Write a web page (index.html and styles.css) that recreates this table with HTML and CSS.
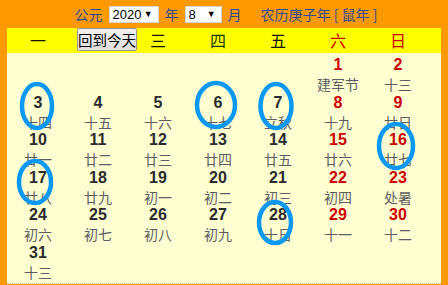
FILE: index.html
```html
<!DOCTYPE html>
<html lang="zh-CN">
<head>
<meta charset="utf-8">
<title>万年历</title>
<link rel="stylesheet" href="styles.css">
</head>
<body>
<div class="page">
  <div class="top">
    <span class="lbl">公元</span>
    <span class="sel sel-year"><span class="val">2020</span><span class="arr">▼</span></span>
    <span class="lbl">年</span>
    <span class="sel sel-month"><span class="val">8</span><span class="arr">▼</span></span>
    <span class="lbl">月</span>
    <span class="lbl lyear">农历庚子年 [ 鼠年 ]</span>
  </div>
  <div class="panel">
    <div class="week">
      <div class="wd">一</div>
      <div class="wd"><button class="today">回到今天</button></div>
      <div class="wd">三</div>
      <div class="wd thu">四</div>
      <div class="wd">五</div>
      <div class="wd we">六</div>
      <div class="wd we">日</div>
    </div>
    <div class="days">
      <div class="d"></div><div class="d"></div><div class="d"></div><div class="d"></div><div class="d"></div>
      <div class="d we"><div class="n">1</div><div class="l">建军节</div></div>
      <div class="d we"><div class="n">2</div><div class="l">十三</div></div>

      <div class="d"><div class="n">3</div><div class="l">十四</div></div>
      <div class="d"><div class="n">4</div><div class="l">十五</div></div>
      <div class="d"><div class="n">5</div><div class="l">十六</div></div>
      <div class="d"><div class="n">6</div><div class="l">十七</div></div>
      <div class="d"><div class="n">7</div><div class="l">立秋</div></div>
      <div class="d we"><div class="n">8</div><div class="l">十九</div></div>
      <div class="d we"><div class="n">9</div><div class="l">廿日</div></div>

      <div class="d"><div class="n">10</div><div class="l">廿一</div></div>
      <div class="d"><div class="n">11</div><div class="l">廿二</div></div>
      <div class="d"><div class="n">12</div><div class="l">廿三</div></div>
      <div class="d"><div class="n">13</div><div class="l">廿四</div></div>
      <div class="d"><div class="n">14</div><div class="l">廿五</div></div>
      <div class="d we"><div class="n">15</div><div class="l">廿六</div></div>
      <div class="d we"><div class="n">16</div><div class="l">廿七</div></div>

      <div class="d"><div class="n">17</div><div class="l">廿八</div></div>
      <div class="d"><div class="n">18</div><div class="l">廿九</div></div>
      <div class="d"><div class="n">19</div><div class="l">初一</div></div>
      <div class="d"><div class="n">20</div><div class="l">初二</div></div>
      <div class="d"><div class="n">21</div><div class="l">初三</div></div>
      <div class="d we"><div class="n">22</div><div class="l">初四</div></div>
      <div class="d we"><div class="n">23</div><div class="l">处暑</div></div>

      <div class="d"><div class="n">24</div><div class="l">初六</div></div>
      <div class="d"><div class="n">25</div><div class="l">初七</div></div>
      <div class="d"><div class="n">26</div><div class="l">初八</div></div>
      <div class="d"><div class="n">27</div><div class="l">初九</div></div>
      <div class="d"><div class="n">28</div><div class="l">十日</div></div>
      <div class="d we"><div class="n">29</div><div class="l">十一</div></div>
      <div class="d we"><div class="n">30</div><div class="l">十二</div></div>

      <div class="d"><div class="n">31</div><div class="l">十三</div></div>
    </div>
  </div>
  <svg class="marks" width="448" height="285" viewBox="0 0 448 285" aria-hidden="true">
    <g fill="none" stroke="#0a98f5" stroke-width="4.5">
      <ellipse cx="37" cy="106" rx="15" ry="22"/>
      <ellipse cx="216" cy="105" rx="19" ry="22"/>
      <ellipse cx="276" cy="106" rx="15.5" ry="22"/>
      <ellipse cx="396" cy="146" rx="17" ry="22"/>
      <ellipse cx="35" cy="182" rx="16" ry="21"/>
      <ellipse cx="275" cy="222.5" rx="16" ry="20.5"/>
    </g>
  </svg>
</div>
</body>
</html>
```
FILE: styles.css
```css
html, body {
  margin: 0;
  padding: 0;
}
body {
  background: #ff9900;
  font-family: "Liberation Sans", "Noto Sans CJK SC", sans-serif;
  width: 448px;
  height: 285px;
  overflow: hidden;
}
.page {
  position: relative;
  width: 448px;
  height: 285px;
}
.top {
  height: 28px;
  display: flex;
  align-items: center;
  justify-content: center;
  gap: 6px;
  color: #2c4a96;
  font-size: 14px;
  font-family: "Noto Sans CJK SC", "Liberation Sans", sans-serif;
  padding-left: 4px;
}
.lbl {
  line-height: 17px;
}
.lyear {
  margin-left: 13px;
}
.sel {
  display: flex;
  align-items: center;
  height: 17px;
  box-sizing: border-box;
  background: #fff;
  border: 1px solid #d4d4d4;
  color: #000;
  font-family: "Liberation Sans", sans-serif;
  font-size: 13px;
  padding: 0 5px 0 3px;
}
.sel-year { width: 50px; justify-content: space-between; }
.sel-month { width: 37px; justify-content: space-between; }
.sel .arr {
  font-size: 9px;
  line-height: 10px;
}
.panel {
  margin: 0 7px;
  height: 255px;
  background: #ffffd2;
  border-bottom: 1px dotted #c8c8b0;
  padding-left: 1px;
}
.week {
  display: grid;
  grid-template-columns: repeat(7, 60px);
  height: 25px;
  background: #ffff00;
  margin-left: -1px;
  padding-left: 1px;
}
.wd {
  font-family: "Noto Sans CJK SC", sans-serif;
  font-size: 16px;
  line-height: 25px;
  text-align: center;
  color: #111;
}
.wd.thu { color: #1a3a00; }
.wd.we { color: #cc0000; }
.today {
  display: block;
  margin: 0 0 0 9px;
  width: 60px;
  height: 23px;
  padding: 0;
  font-family: "Noto Sans CJK SC", sans-serif;
  font-size: 14.5px;
  line-height: 19px;
  color: #000;
  background: linear-gradient(#f2f2f2, #dedede);
  border: 1px solid #9a9a9a;
  border-radius: 2px;
}
.days {
  display: grid;
  grid-template-columns: repeat(7, 60px);
  grid-auto-rows: 37.6px;
  padding-top: 2px;
}
.d {
  text-align: center;
}
.n {
  font-family: "Liberation Sans", sans-serif;
  font-weight: bold;
  font-size: 16px;
  line-height: 20px;
  color: #2b2b2b;
}
.d.we .n { color: #cc0000; }
.l {
  font-family: "Noto Sans CJK SC", sans-serif;
  font-size: 14px;
  line-height: 18px;
  color: #5e5e5e;
}
.marks {
  position: absolute;
  left: 0;
  top: 0;
  pointer-events: none;
}
```
